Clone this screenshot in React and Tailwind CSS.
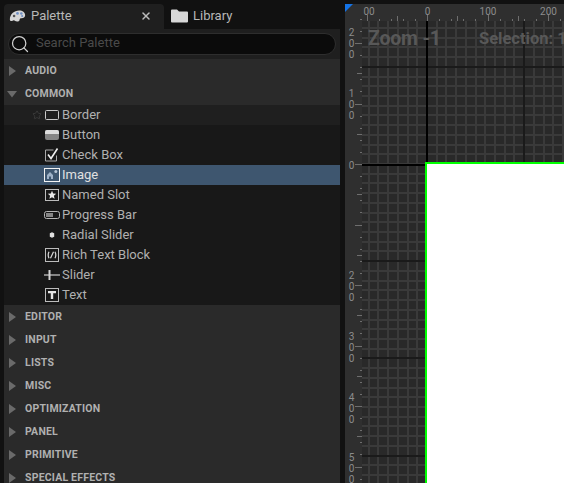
import { Search, X, Star } from "lucide-react";

const Caret = ({ open }) => (
  <svg width="12" height="12" viewBox="0 0 12 12" className="shrink-0">
    {open ? (
      <path d="M1 3h10L6 9.5z" fill="#6a6a6a" />
    ) : (
      <path d="M3 1v10L10 6z" fill="#6a6a6a" />
    )}
  </svg>
);

const Category = ({ label, open }) => (
  <div className="flex h-[23px] shrink-0 items-center gap-[7px] bg-[#2a2a2a] pl-[2px]">
    <Caret open={open} />
    <span className="text-[10.5px] font-bold tracking-[0.2px] text-[#b0b0b0]">{label}</span>
  </div>
);

const Frame = ({ children }) => (
  <svg width="16" height="16" viewBox="0 0 16 16" fill="none">
    {children}
  </svg>
);

const icons = {
  Border: (
    <Frame>
      <rect x="1.5" y="3.5" width="13" height="9" rx="1" stroke="#c8c8c8" />
    </Frame>
  ),
  Button: (
    <Frame>
      <rect x="1" y="3" width="14" height="10" rx="2" fill="#858585" />
      <path d="M1 7V5a2 2 0 0 1 2-2h10a2 2 0 0 1 2 2v2z" fill="#dcdcdc" />
    </Frame>
  ),
  "Check Box": (
    <Frame>
      <path d="M12.5 8.5v5.5h-11v-11h8" stroke="#a8a8a8" />
      <path d="M4 7.5l3 4 6.5-10" stroke="#eeeeee" strokeWidth="1.6" />
    </Frame>
  ),
  Image: (
    <Frame>
      <rect x="0.5" y="1.5" width="15" height="13" stroke="#f2f2f2" />
      <path d="M3 12V8l3-3 3 3v4H7V9.5H5V12z" fill="#9fb2c8" />
      <circle cx="11.8" cy="4.6" r="1.5" fill="#b6c5d6" />
    </Frame>
  ),
  "Named Slot": (
    <Frame>
      <rect x="1.5" y="2.5" width="13" height="11" stroke="#bcbcbc" />
      <path
        d="M8 3.8l1.2 2.8 3 .2-2.3 2 .7 3L8 10.2 5.4 11.8l.7-3-2.3-2 3-.2z"
        fill="#e8e8e8"
      />
    </Frame>
  ),
  "Progress Bar": (
    <Frame>
      <rect x="0.5" y="4.5" width="15" height="7" rx="2" stroke="#b4b4b4" />
      <rect x="2" y="6" width="7" height="4" fill="#858585" />
    </Frame>
  ),
  "Radial Slider": (
    <Frame>
      <path d="M8 5.2l2.2 1v3.6l-2.2 1-2.2-1V6.200z" fill="#e0e0e0" />
    </Frame>
  ),
  "Rich Text Block": (
    <Frame>
      <rect x="1.5" y="1.5" width="13" height="13" stroke="#bcbcbc" />
      <path
        d="M5 4.800Q3.400 8 5 11.200M11 4.800Q12.600 8 11 11.200M9.500 4.800L6.500 11.200"
        stroke="#d8d8d8"
        strokeWidth="1.200"
      />
    </Frame>
  ),
  Slider: (
    <Frame>
      <rect x="0" y="7" width="16" height="2" fill="#858585" />
      <rect x="4.500" y="3" width="2" height="10" fill="#d4d4d4" />
    </Frame>
  ),
  Text: (
    <Frame>
      <rect x="1.5" y="1.5" width="13" height="13" stroke="#bcbcbc" />
      <path d="M4 4h8v2.200H9.200V12H6.800V6.200H4z" fill="#e4e4e4" />
    </Frame>
  ),
};

const widgets = [
  "Border",
  "Button",
  "Check Box",
  "Image",
  "Named Slot",
  "Progress Bar",
  "Radial Slider",
  "Rich Text Block",
  "Slider",
  "Text",
];

const WidgetRow = ({ name }) => {
  const hovered = name === "Border";
  const selected = name === "Image";
  return (
    <div
      className={`flex h-5 items-center ${
        selected ? "bg-[#3e566f]" : hovered ? "bg-[#1f1f1f]" : "bg-[#181818]"
      }`}
    >
      <div className="flex h-full w-10 items-center pl-7">
        {hovered && <Star size={10} className="text-[#3f3f3f]" />}
      </div>
      <div className="flex h-4 w-4 items-center justify-center">{icons[name]}</div>
      <span className={`ml-0.5 text-[13px] ${selected ? "text-[#e0e0e0]" : "text-[#b0b0b0]"}`}>
        {name}
      </span>
    </div>
  );
};

const rulerColor = "#6e6e6e";
const X0 = 427;
const Y0 = 164;
const UNIT = 60.5;
const GRID = 9.72;

const range = (from, to, step) => {
  const out = [];
  for (let v = from; v <= to; v += step) out.push(v);
  return out;
};

const digits = [
  ["2", 36],
  ["0", 47],
  ["0", 58],
  ["1", 97],
  ["0", 108],
  ["0", 119],
  ["0", 169],
  ["2", 279],
  ["0", 290],
  ["0", 301],
  ["3", 340],
  ["0", 351],
  ["0", 362],
  ["4", 401],
  ["0", 412],
  ["0", 423],
  ["5", 461],
  ["0", 472],
  ["0", 482.5],
];

const Designer = () => {
  const gridX = range(-7, 14, 1).map((i) => Math.round(X0 + i * GRID));
  const gridY = range(-15, 33, 1).map((i) => Math.round(Y0 + i * GRID));
  const ticksX = range(0, 17, 1).map((i) => Math.round(X0 - UNIT + (i * UNIT) / 5));
  const ticksY = range(-12, 27, 1).map((i) => Math.round(Y0 + (i * UNIT) / 5));
  return (
    <svg
      width="219"
      height="479"
      viewBox="345 4 219 479"
      className="block"
      shapeRendering="crispEdges"
      style={{ fontFamily: "Roboto, sans-serif" }}
    >
      <rect x="345" y="4" width="219" height="479" fill="#2f2f2f" />
      <rect x="362" y="21" width="202" height="462" fill="#292929" />
      {gridX.filter((x) => x > 362).map((x) => (
        <rect key={x} x={x - 1} y="21" width="2" height="462" fill="#3a3a3a" />
      ))}
      {gridY.filter((y) => y > 21).map((y) => (
        <rect key={y} x="362" y={y - 1} width="202" height="2" fill="#3a3a3a" />
      ))}
      {[67, 261, 358, 456].map((y) => (
        <rect key={y} x="362" y={y - 1} width="202" height="2" fill="#1a1a1a" />
      ))}
      <rect x="523" y="21" width="2" height="462" fill="#1a1a1a" />
      <rect x="426" y="21" width="2" height="143" fill="#000000" />
      <rect x="362" y="164" width="64" height="2" fill="#000000" />

      {ticksX.map((x, i) => {
        const major = i % 5 === 0;
        return (
          <rect key={x} x={x} y={major ? 15 : 19} width="1" height={major ? 6 : 2} fill={rulerColor} />
        );
      })}
      {range(-1, 3, 1).map((i) => (
        <rect key={i} x={Math.round(X0 + (i + 0.5) * UNIT)} y="16" width="1" height="5" fill={rulerColor} />
      ))}
      {ticksY.map((y, i) => {
        const major = i % 5 === 2;
        return (
          <rect key={y} x={major ? 355 : 360} y={y} width={major ? 7 : 2} height="1" fill={rulerColor} />
        );
      })}
      {range(-2, 5, 1).map((i) => (
        <rect key={i} x="357" y={Math.round(Y0 + (i + 0.5) * UNIT)} width="5" height="1" fill={rulerColor} />
      ))}

      <g fontSize="10" fill="#8c8c8c" textAnchor="middle" shapeRendering="auto">
        <text x="369" y="15">00</text>
        <text x="427.5" y="15">0</text>
        <text x="488" y="15">100</text>
        <text x="548.5" y="15">200</text>
        {digits.map(([d, y]) => (
          <text key={y} x="351.5" y={y}>
            {d}
          </text>
        ))}
      </g>
      <path d="M345 4h8l-8 8z" fill="#1473e6" shapeRendering="auto" />
    </svg>
  );
};

export default function App() {
  return (
    <div
      className="flex h-[483px] w-[564px] overflow-hidden bg-[#111111] pt-1 pl-1"
      style={{ fontFamily: "Roboto, sans-serif" }}
    >
      <div className="flex w-[336px] shrink-0 flex-col overflow-hidden">
        <div className="flex h-[25px] shrink-0">
          <div className="flex w-40 items-center rounded-t-[4px] bg-[#1f1f1f] pb-[2px] pl-[5px]">
            <svg width="17" height="14" viewBox="0 0 20 16">
              <path
                d="M1 12C1 6 6 1.500 12 1.500c4 0 7 2.300 7 5.500 0 2.500-2 3.500-4 3.500-1.500 0-2.500.5-2.500 1.800 0 1.200-1 2.200-3 2.200-2 0-2.500-1.500-4-1.500-1.200 0-1.500 1-2.500 1C1.700 14 1 13 1 12z"
                fill="#d6d6d6"
              />
              <circle cx="10" cy="5" r="1.600" fill="#6f8fc4" />
              <circle cx="14.500" cy="5" r="1.500" fill="#6f8fc4" />
              <circle cx="15.500" cy="8" r="1.200" fill="#6f8fc4" />
              <circle cx="6" cy="8" r="1.500" fill="#555555" />
            </svg>
            <span className="ml-[5px] text-[13px] text-[#b8b8b8]">Palette</span>
            <X size={12} strokeWidth={3} className="ml-auto mr-3 text-[#bcbcbc]" />
          </div>
          <div className="flex items-center pb-[2px] pl-[7px]">
            <svg width="17" height="14" viewBox="0 0 17 14">
              <path d="M0 1.500A1 1 0 0 1 1 .5h5l2 2h8a1 1 0 0 1 1 1v9a1 1 0 0 1-1 1H1a1 1 0 0 1-1-1z" fill="#d8d8d8" />
            </svg>
            <span className="ml-[5px] text-[13px] text-[#b8b8b8]">Library</span>
          </div>
        </div>

        <div className="flex h-[30px] shrink-0 items-center bg-[#1f1f1f] px-1">
          <div className="flex h-[22px] w-full items-center rounded-full border border-[#2e2e2e] bg-[#0b0b0b] pl-[1px]">
            <Search size={20} strokeWidth={1.5} className="shrink-0 text-[#d0d0d0]" />
            <span className="mb-[2px] ml-[6px] text-[13px] text-[#4a4a4a]">Search Palette</span>
          </div>
        </div>

        <Category label="AUDIO" />
        <Category label="COMMON" open />
        <div className="shrink-0">
          {widgets.map((name) => (
            <WidgetRow key={name} name={name} />
          ))}
        </div>
        {["EDITOR", "INPUT", "LISTS", "MISC", "OPTIMIZATION", "PANEL", "PRIMITIVE", "SPECIAL EFFECTS"].map((label) => (
          <Category key={label} label={label} />
        ))}
      </div>

      <div className="relative ml-[5px] min-w-0 flex-1 overflow-hidden">
        <Designer />
        <span className="absolute left-[23px] top-[23px] text-[19.5px] leading-6 font-bold tracking-[-0.2px] text-[#585858]">
          Zoom -1
        </span>
        <span className="absolute left-[134px] top-[23px] whitespace-nowrap text-[16.5px] leading-6 font-bold text-[#585858]">
          Selection: 1
        </span>
        <div className="absolute left-[80px] top-[158px] h-[400px] w-[300px] border-2 border-[#00ff00] bg-white" />
      </div>
    </div>
  );
}
